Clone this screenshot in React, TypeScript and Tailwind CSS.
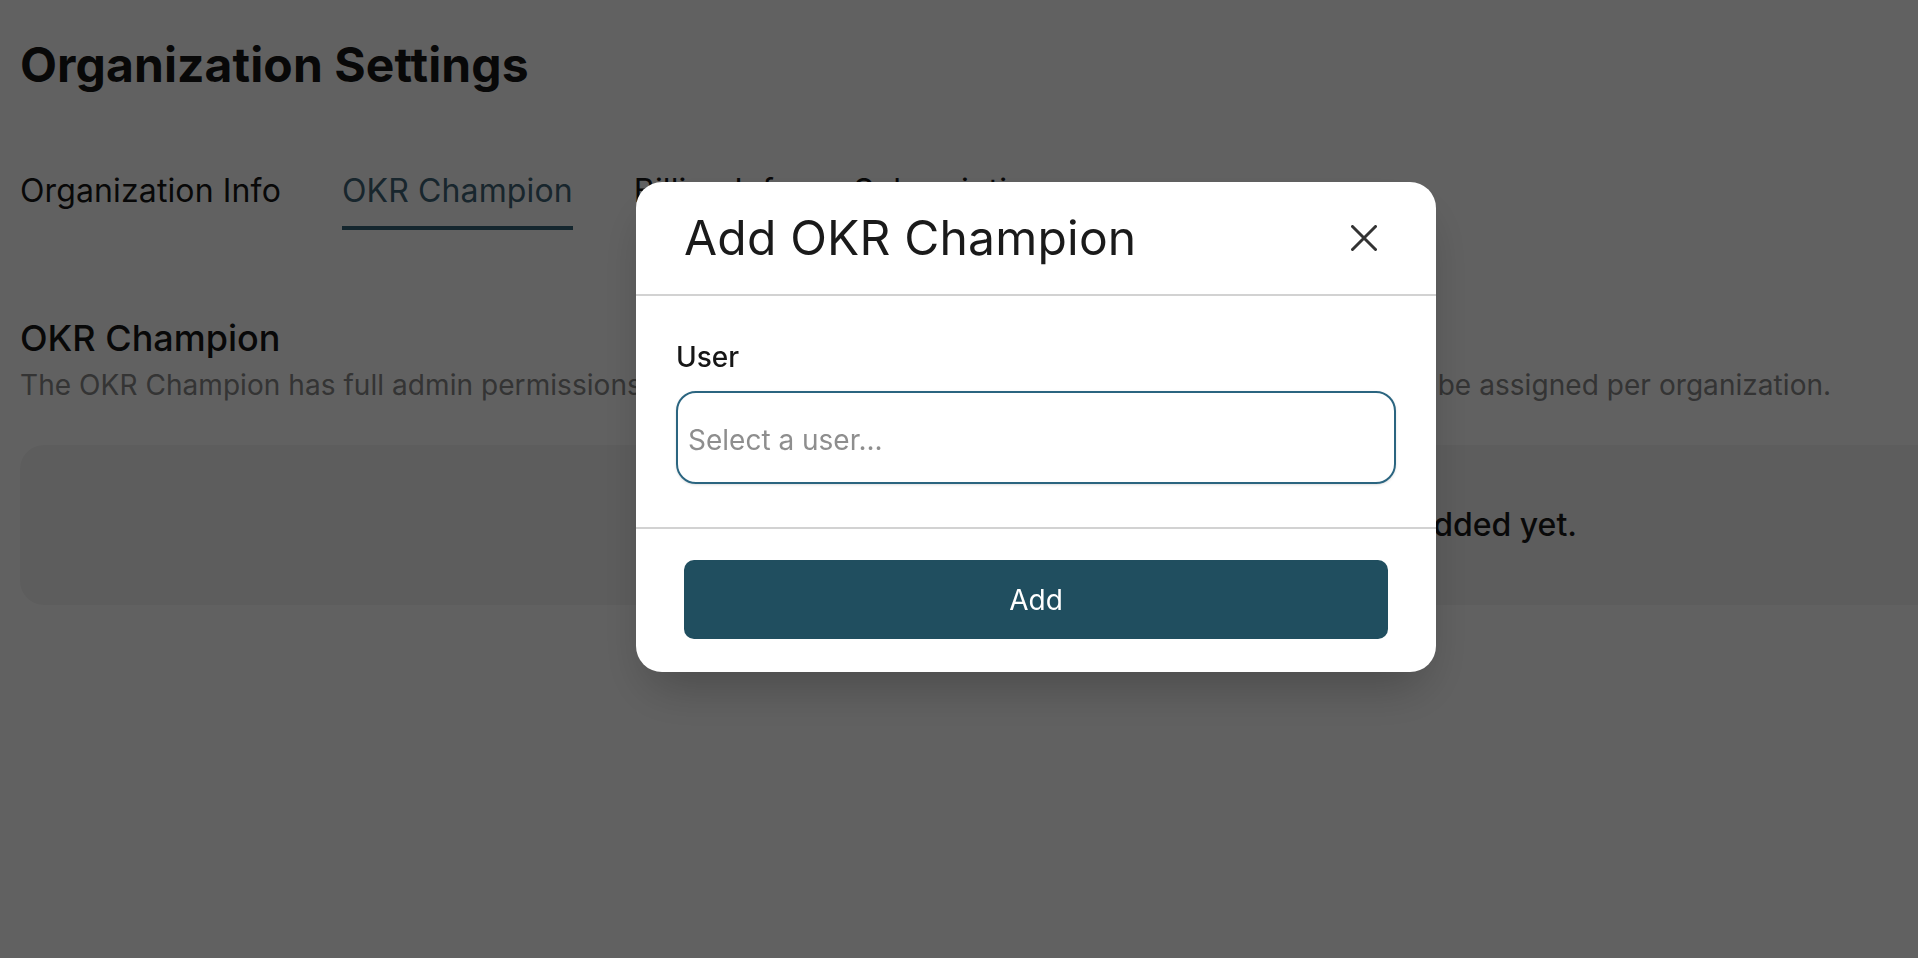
import React from 'react';

const tabs = ['Organization Info', 'OKR Champion', 'Billing Info', 'Subscription'];

const CloseIcon = () => (
  <svg width="26" height="26" viewBox="0 0 26 26" fill="none">
    <path d="M1.5 1.5L24.5 24.5M24.5 1.5L1.5 24.5" stroke="#333333" strokeWidth="3" strokeLinecap="round" />
  </svg>
);

export default function App() {
  const active = 'OKR Champion';

  return (
    <div className="relative min-h-screen w-full overflow-hidden bg-white font-['Inter',sans-serif] text-[#111111]">
      {/* Page */}
      <div className="pl-5 pt-[35px]">
        <h1 className="text-[48px] font-bold leading-[60px] tracking-[0.002em] text-[#161616]">Organization Settings</h1>

        <div className="mt-[76px] flex gap-[61px]">
          {tabs.map((tab) => (
            <div
              key={tab}
              className={
                tab === active
                  ? 'border-b-4 border-[#35657a] pb-[15px] text-[32px] leading-[40px] tracking-[0.004em] text-[#3f6476]'
                  : 'border-b-4 border-transparent pb-[15px] text-[32px] leading-[40px] tracking-[0.004em] text-[#161616]'
              }
            >
              {tab}
            </div>
          ))}
        </div>

        <h2 className="mt-[86px] text-[36px] font-medium leading-[44px] text-[#161616]">OKR Champion</h2>
        <p className="mt-[5px] whitespace-nowrap text-[28px] leading-[40px] tracking-[0.002em] text-[#888888]">
          The OKR Champion has full admin permissions to manage your organization. Only one OKR Champion can be assigned per organization.
        </p>

        <div className="mt-10 flex h-[160px] items-center justify-end rounded-l-3xl bg-[#f5f5f5] pr-[341px]">
          <span className="whitespace-nowrap text-[32px] font-medium text-[#1a1a1a]">No OKR Champion has been added yet.</span>
        </div>
      </div>

      {/* Modal */}
      <div className="fixed inset-0 bg-black/[0.62]">
        <div className="ml-[636px] mt-[182px] w-[800px] rounded-[26px] bg-white shadow-2xl">
          <div className="flex h-[114px] items-center justify-between border-b-2 border-[#d2d2d2] px-12">
            <h3 className="text-[48px] leading-[56px] tracking-[0.004em] text-[#1a1a1a]">Add OKR Champion</h3>
            <button className="flex h-12 w-12 items-center justify-center">
              <CloseIcon />
            </button>
          </div>

          <div className="border-b-2 border-[#d2d2d2] px-10 pb-[43px] pt-[41px]">
            <label className="block text-[28px] font-medium leading-[40px] text-[#161616]">User</label>
            <input
              placeholder="Select a user..."
              className="mt-[14px] h-[93px] w-full rounded-[20px] border-2 border-[#2b6580] pl-[10px] pt-[4px] text-[28px] text-[#161616] shadow-sm outline-none placeholder:text-[#8e8e8e]"
            />
          </div>

          <div className="px-12 pb-[33px] pt-[31px]">
            <button className="flex h-[79px] w-full items-center justify-center rounded-[10px] bg-[#204e5f] text-[28px] text-white">
              Add
            </button>
          </div>
        </div>
      </div>
    </div>
  );
}
